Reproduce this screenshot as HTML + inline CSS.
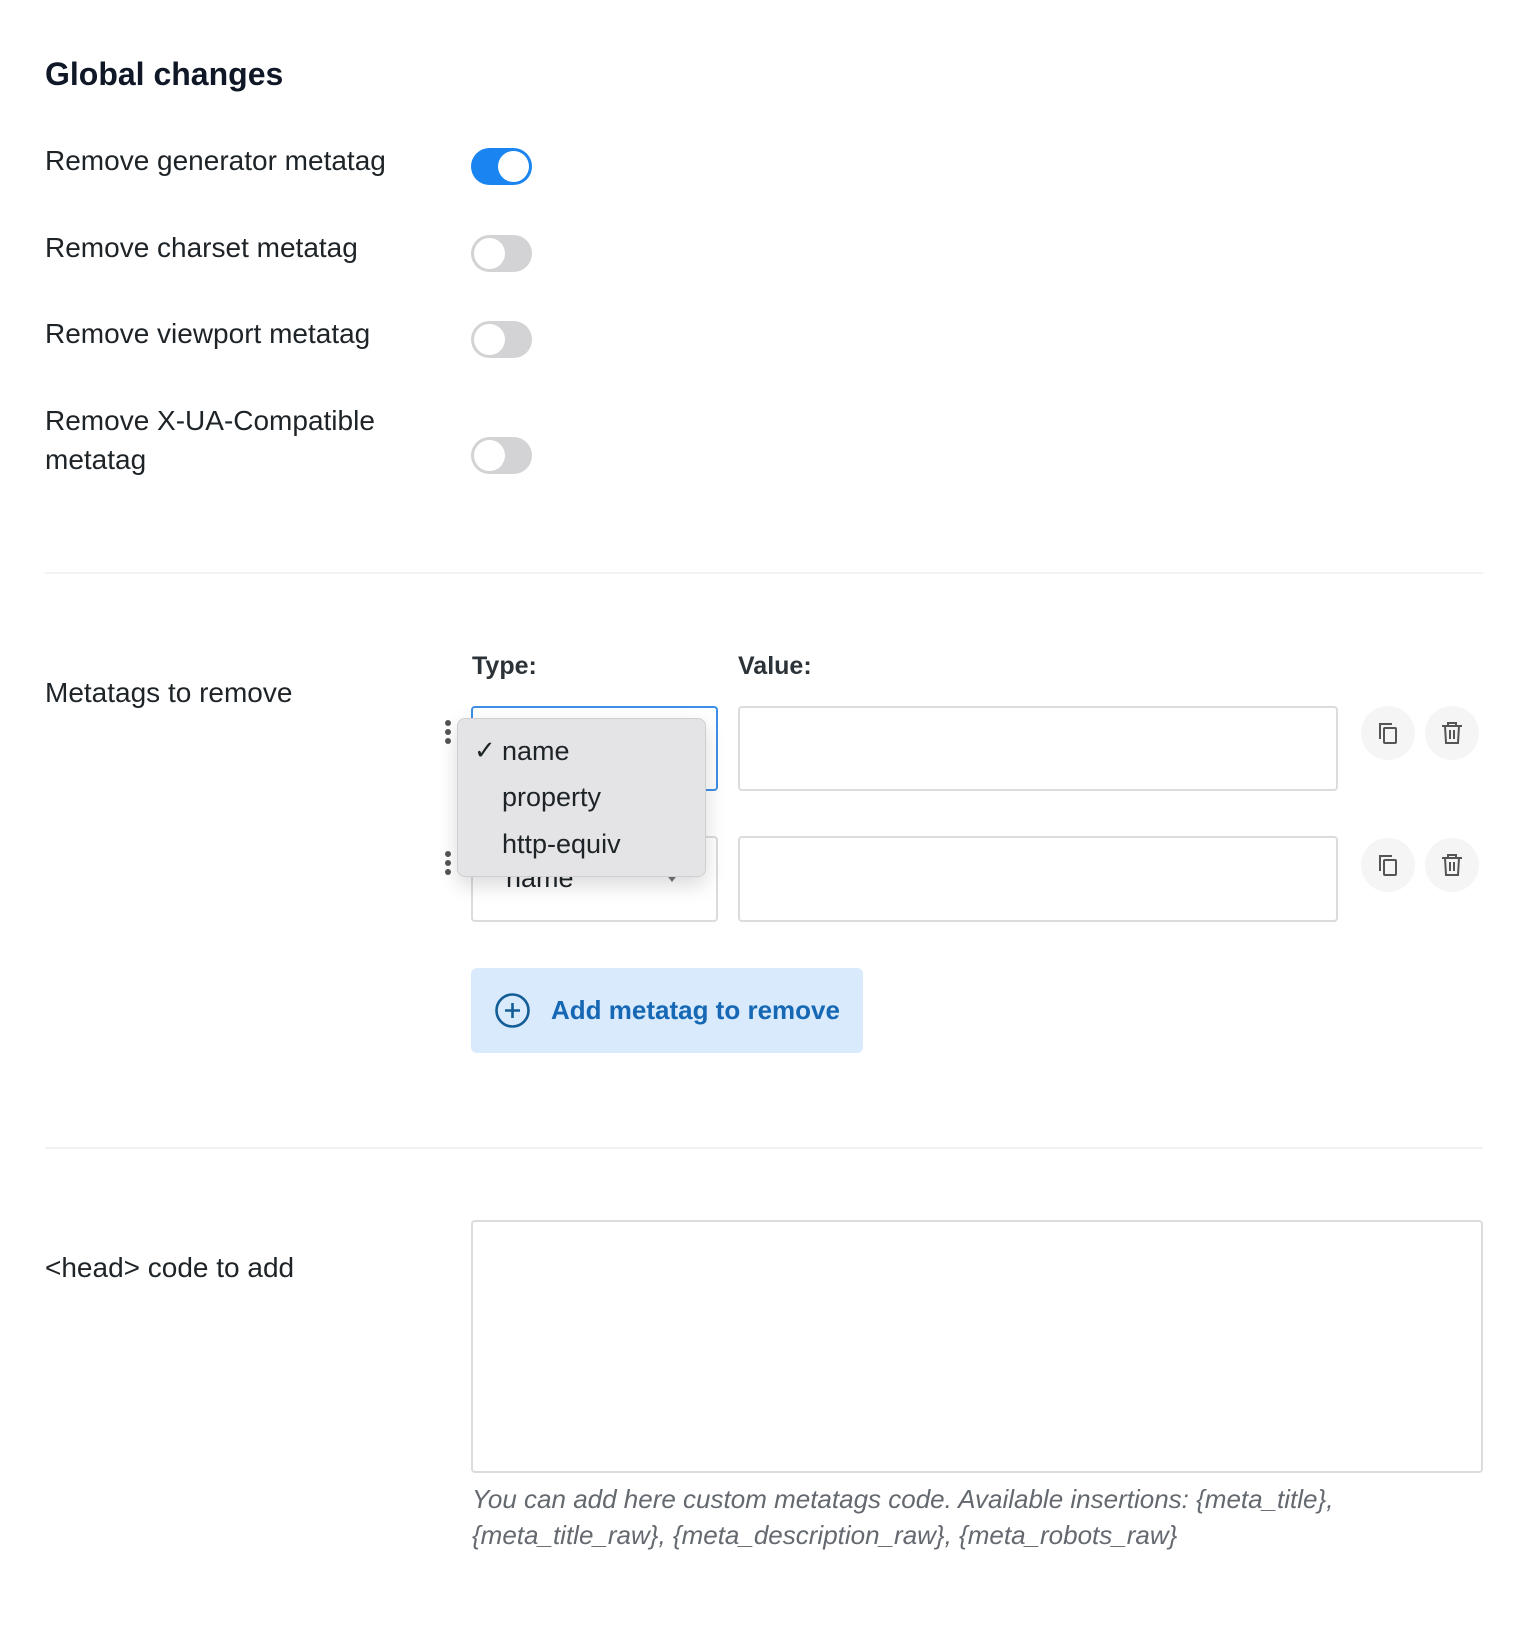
<!DOCTYPE html>
<html><head><meta charset="utf-8"><style>
*{box-sizing:border-box;margin:0;padding:0}
body{width:1536px;height:1625px;background:#fff;font-family:"Liberation Sans",sans-serif;color:#1d2327;position:relative;overflow:hidden}
.a{position:absolute;white-space:nowrap}
.lbl{font-size:28px;line-height:40px}
.tg{position:absolute;left:471px;width:61px;height:37px;border-radius:19px;background:#d3d3d5}
.tg::after{content:"";position:absolute;left:3px;top:3px;width:31px;height:31px;border-radius:50%;background:#fff}
.tg.on{background:#1a85f0}
.tg.on::after{left:27px}
.hr{position:absolute;left:45px;width:1438px;height:2px;background:#f2f2f4}
.inp{position:absolute;border:2px solid #dcdcde;border-radius:4px;background:#fff}
.ib{position:absolute;width:54px;height:54px;border-radius:50%;background:#f5f5f6}
.dots{position:absolute;width:6px}
.dots i{display:block;width:6px;height:6px;border-radius:50%;background:#555;margin-bottom:3px}
</style></head><body>
<div class="a" style="left:45px;top:56px;font-size:32px;font-weight:bold;color:#101828">Global changes</div>

<div class="a lbl" style="left:45px;top:141px">Remove generator metatag</div>
<div class="tg on" style="top:148px"></div>
<div class="a lbl" style="left:45px;top:228px">Remove charset metatag</div>
<div class="tg" style="top:235px"></div>
<div class="a lbl" style="left:45px;top:314px">Remove viewport metatag</div>
<div class="tg" style="top:321px"></div>
<div class="a lbl" style="left:45px;top:401px">Remove X-UA-Compatible</div>
<div class="a lbl" style="left:45px;top:440px">metatag</div>
<div class="tg" style="top:437px"></div>

<div class="hr" style="top:572px"></div>

<div class="a lbl" style="left:45px;top:673px">Metatags to remove</div>
<div class="a" style="left:472px;top:652px;font-size:25px;font-weight:bold;color:#2c3338">Type:</div>
<div class="a" style="left:738px;top:652px;font-size:25px;font-weight:bold;color:#2c3338">Value:</div>

<div class="dots" style="left:445px;top:720px"><i></i><i></i><i></i></div>
<div class="inp" style="left:471px;top:706px;width:247px;height:85px;border-color:#3d8fe6"></div>
<div class="inp" style="left:738px;top:706px;width:600px;height:85px"></div>
<div class="ib" style="left:1361px;top:706px"></div>
<div class="ib" style="left:1425px;top:706px"></div>

<div class="dots" style="left:445px;top:851px"><i></i><i></i><i></i></div>
<div class="inp" style="left:471px;top:836px;width:247px;height:86px"></div>
<div class="a" style="left:506px;top:863px;font-size:27px">name</div>
<div class="a" style="left:665px;top:873px;width:0;height:0;border-left:7px solid transparent;border-right:7px solid transparent;border-top:9px solid #777"></div>
<div class="inp" style="left:738px;top:836px;width:600px;height:86px"></div>
<div class="ib" style="left:1361px;top:838px"></div>
<div class="ib" style="left:1425px;top:838px"></div>

<svg class="a" style="left:1374px;top:719px" width="28" height="28" viewBox="0 0 28 28" fill="none" stroke="#555" stroke-width="2"><path d="M6 20V5h12"/><rect x="10" y="9" width="12" height="15" rx="1"/></svg>
<svg class="a" style="left:1438px;top:719px" width="28" height="28" viewBox="0 0 28 28" fill="none" stroke="#555" stroke-width="2"><path d="M4 7h20M10 7V4h8v3M7 7l1 17h12l1-17M12 11v9M16 11v9"/></svg>
<svg class="a" style="left:1374px;top:851px" width="28" height="28" viewBox="0 0 28 28" fill="none" stroke="#555" stroke-width="2"><path d="M6 20V5h12"/><rect x="10" y="9" width="12" height="15" rx="1"/></svg>
<svg class="a" style="left:1438px;top:851px" width="28" height="28" viewBox="0 0 28 28" fill="none" stroke="#555" stroke-width="2"><path d="M4 7h20M10 7V4h8v3M7 7l1 17h12l1-17M12 11v9M16 11v9"/></svg>

<div class="a" style="left:457px;top:718px;width:249px;height:159px;background:#e4e4e6;border:1px solid #cfcfd2;border-radius:8px;box-shadow:0 8px 20px rgba(0,0,0,.15)"></div>
<div class="a" style="left:474px;top:735px;font-size:26px">✓</div>
<div class="a" style="left:502px;top:736px;font-size:27px">name</div>
<div class="a" style="left:502px;top:782px;font-size:27px">property</div>
<div class="a" style="left:502px;top:829px;font-size:27px">http-equiv</div>

<div class="a" style="left:471px;top:968px;width:392px;height:85px;background:#d8eafb;border-radius:6px"></div>
<svg class="a" style="left:494px;top:992px" width="37" height="37" viewBox="0 0 37 37" fill="none" stroke="#135e96" stroke-width="2.6"><circle cx="18.5" cy="18.5" r="16"/><path d="M18.5 11v15M11 18.5h15"/></svg>
<div class="a" style="left:551px;top:995px;font-size:26px;font-weight:bold;color:#1668b5">Add metatag to remove</div>

<div class="hr" style="top:1147px"></div>

<div class="a lbl" style="left:45px;top:1248px">&lt;head&gt; code to add</div>
<div class="inp" style="left:471px;top:1220px;width:1012px;height:253px"></div>
<div class="a" style="left:472px;top:1481px;font-size:26px;font-style:italic;color:#646970;line-height:36px">You can add here custom metatags code. Available insertions: {meta_title},<br>{meta_title_raw}, {meta_description_raw}, {meta_robots_raw}</div>
</body></html>
